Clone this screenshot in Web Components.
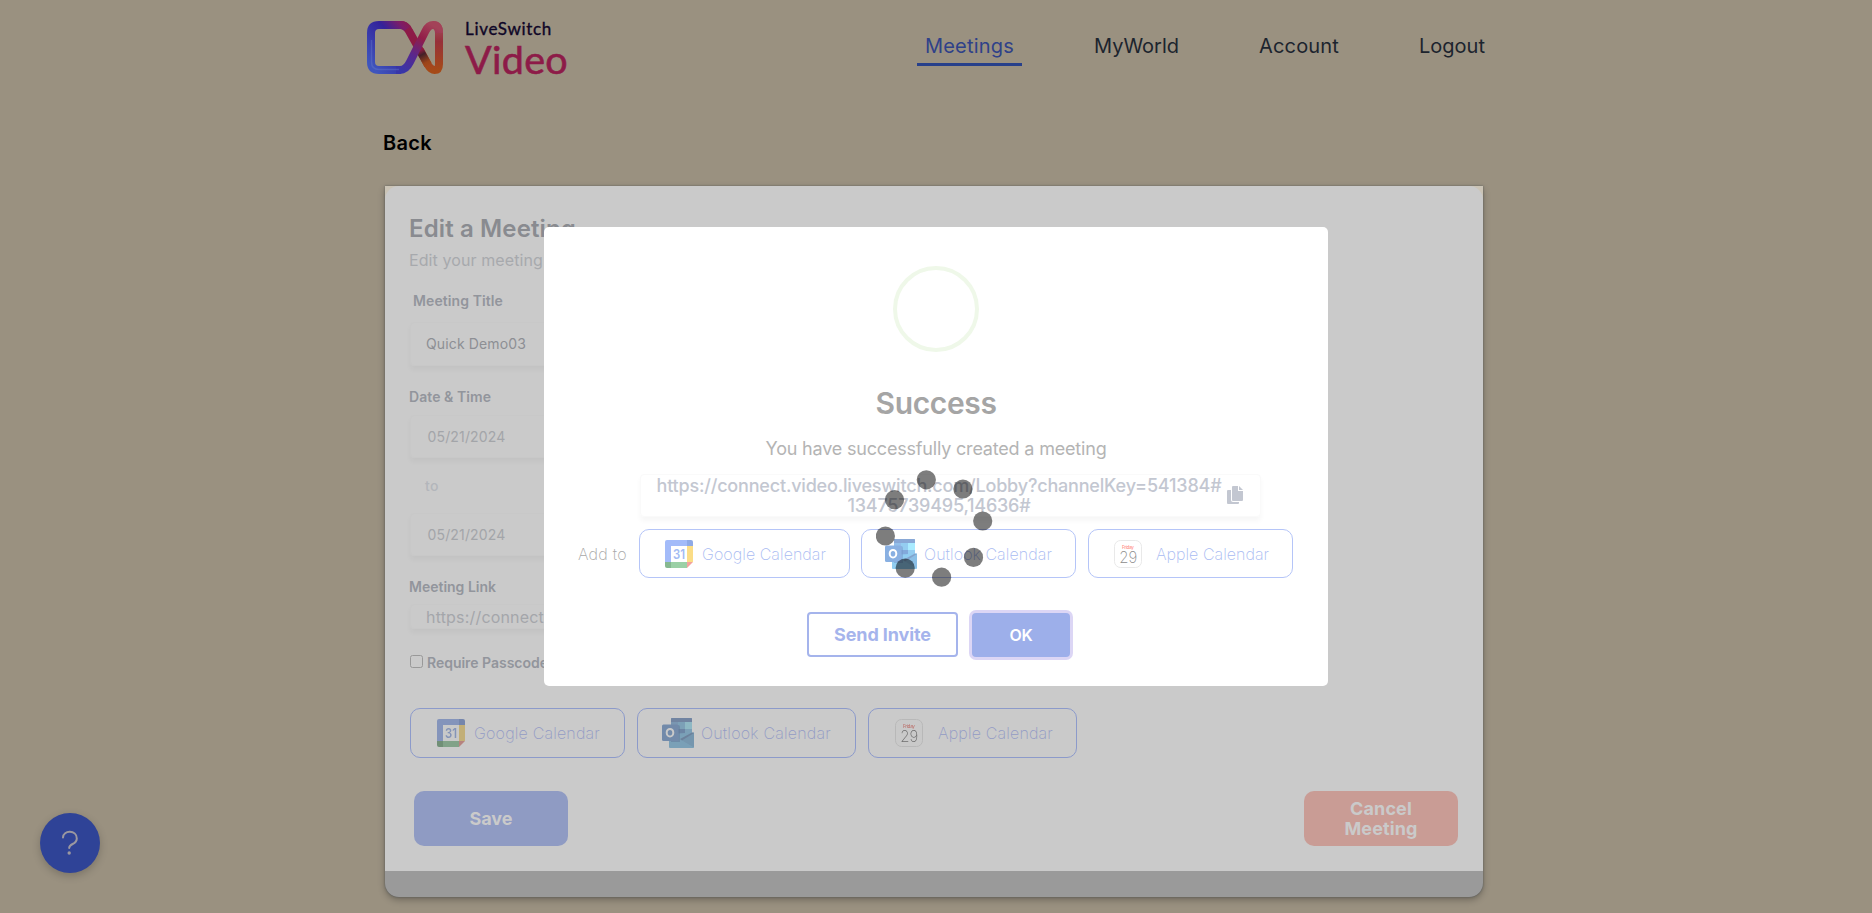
<!DOCTYPE html>
<html lang="en">
<head>
<meta charset="utf-8">
<title>LiveSwitch Video</title>
<style>
html,body{margin:0;height:100%;overflow:hidden}
body{background:#9a9180;font-family:Inter,sans-serif;position:relative}
</style>
</head>
<body>
<meeting-page></meeting-page>
<success-dialog></success-dialog>
<dot-spinner></dot-spinner>
<script>
function define(name, html, after) {
  const t = document.createElement('template');
  t.innerHTML = html;
  customElements.define(name, class extends HTMLElement {
    connectedCallback() {
      if (this.shadowRoot) return;
      this.attachShadow({mode: 'open'}).appendChild(t.content.cloneNode(true));
      if (after) after(this, this.shadowRoot);
    }
  });
}

/* One line of text, tracked so that it spans the width in its "w" attribute */
define('fit-text', `<style>:host{display:inline-block;white-space:nowrap}span{display:inline-block}</style><span><slot></slot></span>`, (el, root) => {
  const s = root.querySelector('span'), w = parseFloat(el.getAttribute('w'));
  const n = el.textContent.length;
  s.style.letterSpacing = ((w - s.getBoundingClientRect().width) / n).toFixed(3) + 'px';
});

define('google-icon', `<style>:host{display:block;width:28px;height:28px}svg{display:block}text{font:600 13px Inter,sans-serif}</style>
<svg width="28" height="28" viewBox="0 0 28 28">
<path d="M2 0H22V6H6V22H0V2Q0 0 2 0Z" fill="#a3bbf9"/><path d="M22 0H26Q28 0 28 2V6H22Z" fill="#8faae6"/>
<path d="M22 6H28V22H22Z" fill="#fbdd87"/><path d="M6 22H22V28H6Z" fill="#9bd0a6"/><path d="M0 22H6V28H2Q0 28 0 26Z" fill="#86b890"/>
<path d="M22 22H28L22 28Z" fill="#f3a29c"/><path d="M6 6H22V22H6Z" fill="#fff"/><text x="14" y="18.6" text-anchor="middle" fill="#a3bbf3" textLength="12" lengthAdjust="spacingAndGlyphs">31</text></svg>`);

define('outlook-icon', `<style>:host{display:block;width:32px;height:30px}svg{display:block}</style>
<svg width="32" height="30" viewBox="0 0 32 30">
<path d="M10 0H29Q30 0 30 1V16H9V1Q9 0 10 0Z" fill="#93bfea"/><path d="M9 1Q9 0 10 0H29Q30 0 30 1V4H9Z" fill="#89a8d6"/>
<path d="M16 4H23V11H16Z" fill="#94cdf1"/><path d="M23 4H30V11H23Z" fill="#a9ebff"/><path d="M16 11H23V17H16Z" fill="#82a9db"/><path d="M23 11H30V17H23Z" fill="#94cdf1"/>
<path d="M7 16L32 14.500V29Q32 30 31 30H8Q7 30 7 29Z" fill="#91cdf1"/><path d="M32 14.500L20 22.500L32 29.500Z" fill="#8bbfe6"/><path d="M30 14.500L32 15L20 22.500L18 21Z" fill="#83a4cd"/>
<path d="M9 7H16Q18 7 18 9V24H9Z" fill="#7398ca" opacity=".5"/><rect y="6.500" width="16.500" height="16.500" rx="1.500" fill="#89b0e2"/>
<ellipse cx="8" cy="14.700" rx="3.300" ry="3.800" fill="none" stroke="#fff" stroke-width="2"/></svg>`);

define('apple-icon', `<style>:host{display:block;width:28px;height:28px}svg{display:block}</style>
<svg width="28" height="28" viewBox="0 0 28 28"><rect x=".5" y=".5" width="27" height="27" rx="6" fill="#fff" stroke="#e9e9e9"/>
<text x="14" y="8.800" text-anchor="middle" textLength="12" fill="#ff8f88" font-family="Inter,sans-serif" font-size="4.600" font-weight="500">Friday</text>
<text x="14.200" y="23" text-anchor="middle" textLength="18" fill="#8c8c8c" font-family="Inter,sans-serif" font-size="16.500" font-weight="200" lengthAdjust="spacingAndGlyphs">29</text></svg>`);

define('calendar-button', `<style>
:host{display:flex;box-sizing:border-box;align-items:center;border:1px solid var(--line);border-radius:10px;color:var(--ink);font-size:16px;font-weight:250;line-height:20px;flex:none}
::slotted(google-icon),::slotted(outlook-icon),::slotted(apple-icon){filter:var(--icon-filter)}
</style><slot></slot>`);

define('brand-logo', `<style>
:host{display:flex;width:220px;height:60px}
svg{display:block;flex:none;margin-right:21px}
.t{display:flex;flex-direction:column;font-family:Lato,sans-serif}
.a{font-size:17px;line-height:20px;margin-top:1px;color:#0f0627;font-weight:400;-webkit-text-stroke:.35px #0f0627}
.b{font-size:39.500px;line-height:40px;margin-top:0;color:#8d1b48;font-weight:400;-webkit-text-stroke:.6px #8d1b48}
</style>
<svg width="79" height="60" viewBox="15 18 79 60" fill="none" stroke-width="8">
<defs>
<linearGradient id="a" gradientUnits="userSpaceOnUse" x1="18" y1="62" x2="62" y2="24"><stop offset="0" stop-color="#3f55bd"/><stop offset=".6" stop-color="#33229a"/><stop offset=".85" stop-color="#7c1c68"/><stop offset="1" stop-color="#8d1b48"/></linearGradient>
<linearGradient id="b" gradientUnits="userSpaceOnUse" x1="60" y1="34" x2="78" y2="68"><stop offset="0" stop-color="#8d1b48"/><stop offset=".5" stop-color="#8d1b40"/><stop offset=".62" stop-color="#442028"/><stop offset=".85" stop-color="#9b4419"/><stop offset="1" stop-color="#a54a18"/></linearGradient>
<linearGradient id="c" gradientUnits="userSpaceOnUse" x1="0" y1="26" x2="0" y2="70"><stop offset="0" stop-color="#a04a5a"/><stop offset=".35" stop-color="#97303a"/><stop offset="1" stop-color="#a54a18"/></linearGradient>
<linearGradient id="d" gradientUnits="userSpaceOnUse" x1="82" y1="25" x2="54" y2="72"><stop offset="0" stop-color="#a34258"/><stop offset=".3" stop-color="#921d48"/><stop offset=".65" stop-color="#59278d"/><stop offset="1" stop-color="#3836a8"/></linearGradient>
</defs>
<path d="M70 50L78 65Q81 70 84.500 70Q89 70 89 64V33Q89 25 83 25" stroke="url(#c)"/>
<path d="M50 25Q56 25 59 31L78 65" stroke="url(#b)"/>
<path d="M51 70H29Q21 70 21 62V33Q21 25 29 25H51Q55 25 57.500 28.500" stroke="url(#a)"/>
<path d="M89 33Q89 25 83 25Q78.500 25 75.500 31L60 62Q56 70 50 70H46" stroke="url(#d)"/>
<path d="M49 69.500H29Q21.500 69.500 21.500 62V40" stroke="#6675c8" stroke-width="1.500" opacity=".45"/>
</svg>
<div class="t"><fit-text class="a" w="87">LiveSwitch</fit-text><fit-text class="b" w="103">Video</fit-text></div>`);

define('site-header', `<style>
:host{display:flex;height:108px;padding-left:365px;box-sizing:border-box}
brand-logo{margin-top:18px}
nav{display:flex;margin:30px 0 0 332px;height:36px;box-sizing:border-box;font-size:20px;line-height:32px;color:#1c242e}
fit-text{height:33px;flex:none}
.on{color:#2f4189;border-bottom:3px solid #27408b;padding:0 8px;margin-right:72px}
.m{margin-right:80px}
</style><brand-logo></brand-logo>
<nav><fit-text class="on" w="89">Meetings</fit-text><fit-text class="m" w="85">MyWorld</fit-text><fit-text class="m" w="80">Account</fit-text><fit-text w="66">Logout</fit-text></nav>`);

define('form-field', `<style>
:host{display:flex;align-items:center;box-sizing:border-box;width:500px;padding-left:15px;border-radius:4px;border:1px solid #c8c8c8;box-shadow:0 4px 5px rgba(0,0,0,.035);line-height:20px}
</style><slot></slot>`);

define('meeting-card', `<style>
:host{display:block;width:1098px;background:#9a9a9a;border-radius:0 0 14px 14px;box-shadow:0 0 2px rgba(60,70,80,.7),0 3px 7px rgba(0,0,0,.28)}
.edge{background:#cbc4b6;height:685px}
.body{box-sizing:border-box;height:685px;background:#cacaca;border-radius:14px 14px 0 0;padding:28px 25px 25px;display:flex;flex-direction:column;align-items:flex-start;--line:#8c9aca;--ink:#939bc5;--icon-filter:brightness(.79) saturate(.8)}
.foot{height:26px}
h1{margin:0 0 0 -1px;font-size:24px;line-height:30px;font-weight:600;color:#898b90}
.sub{font-size:16px;line-height:24px;margin:4px 0 0 -1px;color:#a7a9ad}
label,.lb{font-size:14px;line-height:20px;font-weight:600;color:#92959c}
.v{font-size:14px;color:#8d8f94}.d{font-size:14px;color:#a3a5a9}
.row{display:flex;gap:12px;margin-top:35px}
calendar-button{height:50px}
.chk{display:flex;align-items:flex-start;margin-top:24px;gap:4px}
.chk i{width:13px;height:13px;box-sizing:border-box;border:1px solid #999;border-radius:2.500px;margin-top:2px}
.btns{display:flex;justify-content:space-between;width:1044px;margin:33px 0 0 4px}
.btns div{width:154px;height:55px;border-radius:10px;display:flex;flex-direction:column;align-items:center;justify-content:center;font-size:18px;line-height:20px;font-weight:700;color:#cacaca}
.save{background:#8f9bc3}.cancel{background:#c99c95}
</style>
<div class="edge"><div class="body">
<h1><fit-text w="167">Edit a Meeting</fit-text></h1>
<div class="sub"><fit-text w="134">Edit your meeting</fit-text></div>
<fit-text class="lb" w="90" style="margin:19px 0 0 3px">Meeting Title</fit-text>
<form-field style="height:44px;margin-top:11px"><fit-text class="v" w="100">Quick Demo03</fit-text></form-field>
<fit-text class="lb" w="82" style="margin:21px 0 0 -1px">Date &amp; Time</fit-text>
<form-field style="height:43px;margin-top:8px;padding-left:16.500px"><fit-text class="d" w="78">05/21/2024</fit-text></form-field>
<fit-text class="lb" w="14" style="margin:18px 0 0 15px;color:#b3b6bb;font-weight:500">to</fit-text>
<form-field style="height:43px;margin-top:17px;padding-left:16.500px"><fit-text class="d" w="78">05/21/2024</fit-text></form-field>
<fit-text class="lb" w="87" style="margin:21px 0 0 -1px">Meeting Link</fit-text>
<form-field style="height:25px;margin-top:7px;font-size:16px;color:#a4a6aa"><fit-text w="118">https://connect</fit-text></form-field>
<div class="chk"><i></i><fit-text class="lb" w="121">Require Passcode</fit-text></div>
<div class="row">
<calendar-button style="width:215px;padding-left:26px"><google-icon></google-icon><fit-text w="126" style="margin-left:9px">Google Calendar</fit-text></calendar-button>
<calendar-button style="width:219px;padding-left:24px"><outlook-icon></outlook-icon><fit-text w="130" style="margin-left:7px">Outlook Calendar</fit-text></calendar-button>
<calendar-button style="width:209px;padding-left:26px"><apple-icon></apple-icon><fit-text w="115" style="margin-left:15px">Apple Calendar</fit-text></calendar-button>
</div>
<div class="btns"><div class="save"><fit-text w="43">Save</fit-text></div><div class="cancel"><fit-text w="62">Cancel</fit-text><fit-text w="73">Meeting</fit-text></div></div>
</div></div><div class="foot"></div>`);

define('help-bubble', `<style>
:host{position:absolute;left:40px;top:813px;width:60px;height:60px;border-radius:50%;background:#2f4397;box-shadow:0 3px 9px rgba(0,0,0,.2)}
svg{display:block}
</style><svg width="60" height="60" viewBox="0 0 60 60" fill="none" stroke="#9b98a0" stroke-width="2" stroke-linecap="round"><path d="M23 24.500C23 16.800 36.800 16.800 36.800 25.500C36.800 32 29.200 30 29.200 35"/><circle cx="29.200" cy="40" r="1.700" fill="#9b98a0" stroke="none"/></svg>`);

define('meeting-page', `<style>
:host{display:block;height:913px;overflow:hidden}
.back{margin:19px 0 0 383px;height:59px;font-size:20px;line-height:32px;font-weight:600;color:#000}
meeting-card{margin-left:385px}
</style><site-header></site-header><div class="back"><fit-text w="49">Back</fit-text></div><meeting-card></meeting-card><help-bubble></help-bubble>`);

define('success-dialog', `<style>
:host{position:absolute;left:544px;top:227px;width:784px;height:459px;box-sizing:border-box;background:#fff;border-radius:5px;display:flex;flex-direction:column;align-items:center;--line:#b5c5f8;--ink:#a9bbf2}
.ring{width:86px;height:86px;box-sizing:border-box;border:4px solid #eff8e9;border-radius:50%;margin-top:39px;flex:none}
h2{margin:33px 0 0;font-size:30px;line-height:36px;font-weight:600;color:#a5a5a5}
.sub{font-size:18px;line-height:24px;margin-top:16px;color:#b4b4b4}
.link{display:flex;align-items:center;align-self:flex-start;box-sizing:border-box;width:621px;height:43px;margin:13px 0 0 96px;padding-left:14px;border:1px solid #fafafa;border-radius:4px;box-shadow:0 4px 5px rgba(0,0,0,.035)}
.url{display:flex;flex-direction:column;align-items:center;width:568px;font-size:18px;line-height:20px;font-weight:500;color:#c3c7d1}
.link svg{margin-left:4px}
.row{display:flex;align-items:center;align-self:flex-start;margin:12px 0 0 34px;gap:11.500px}
.add{font-size:16px;line-height:20px;font-weight:250;color:#a8a8a8}
calendar-button{height:49px}
.btns{display:flex;align-items:center;margin:34px 0 0 5px;gap:14px;position:relative}
.btns div{display:flex;align-items:center;justify-content:center;box-sizing:border-box;border-radius:4px}
.send{width:151px;height:45px;border:2px solid #a5b4ec;color:#a5b4ec;font-size:18px;font-weight:700}
.ok{width:98px;height:44px;background:#9dafea;color:#fff;font-size:16px;font-weight:600;box-shadow:0 0 0 3px #dcd6f5}
</style>
<div class="ring"></div>
<h2><fit-text w="121">Success</fit-text></h2>
<div class="sub"><fit-text w="341">You have successfully created a meeting</fit-text></div>
<div class="link"><div class="url"><fit-text w="565">https://connect.video.liveswitch.com/Lobby?channelKey=541384#</fit-text><fit-text w="183">13475739495,14636#</fit-text></div>
<svg width="17" height="19" viewBox="0 0 17 19"><path d="M1 4H4V14Q4 16 6 16H12V17Q12 18 11 18H1Q0 18 0 17V5Q0 4 1 4Z" fill="#c3c7d1"/><path d="M6 0H11V5H16V14Q16 15 15 15H6Q5 15 5 14V1Q5 0 6 0ZM12 0L16 4H12Z" fill="#c3c7d1"/></svg></div>
<div class="row"><fit-text class="add" w="49">Add to</fit-text>
<calendar-button style="width:211px;padding-left:25.500px"><google-icon></google-icon><fit-text w="124" style="margin-left:9px">Google Calendar</fit-text></calendar-button>
<calendar-button style="width:215px;padding-left:23px"><outlook-icon></outlook-icon><fit-text w="128" style="margin-left:7px">Outlook Calendar</fit-text></calendar-button>
<calendar-button style="width:205px;padding-left:25.500px"><apple-icon></apple-icon><fit-text w="113" style="margin-left:14px">Apple Calendar</fit-text></calendar-button></div>
<div class="btns"><div class="send"><fit-text w="97">Send Invite</fit-text></div><div class="ok"><fit-text w="23">OK</fit-text></div></div>`);

define('dot-spinner', `<style>
:host{position:absolute;left:876px;top:469.500px;width:117px;height:117px}
svg{display:block}
</style><svg width="117" height="117" viewBox="876 469.500 117 117" fill="#000" fill-opacity=".51"><circle cx="926.300" cy="479.300" r="9.600"/><circle cx="962.900" cy="488.500" r="9.600"/><circle cx="982.700" cy="520.500" r="9.600"/><circle cx="973.500" cy="556.900" r="9.600"/><circle cx="941.600" cy="576.700" r="9.600"/><circle cx="905.200" cy="567.600" r="9.600"/><circle cx="885.400" cy="535.500" r="9.600"/><circle cx="894.500" cy="499.200" r="9.600"/></svg>`);
</script>
</body>
</html>
